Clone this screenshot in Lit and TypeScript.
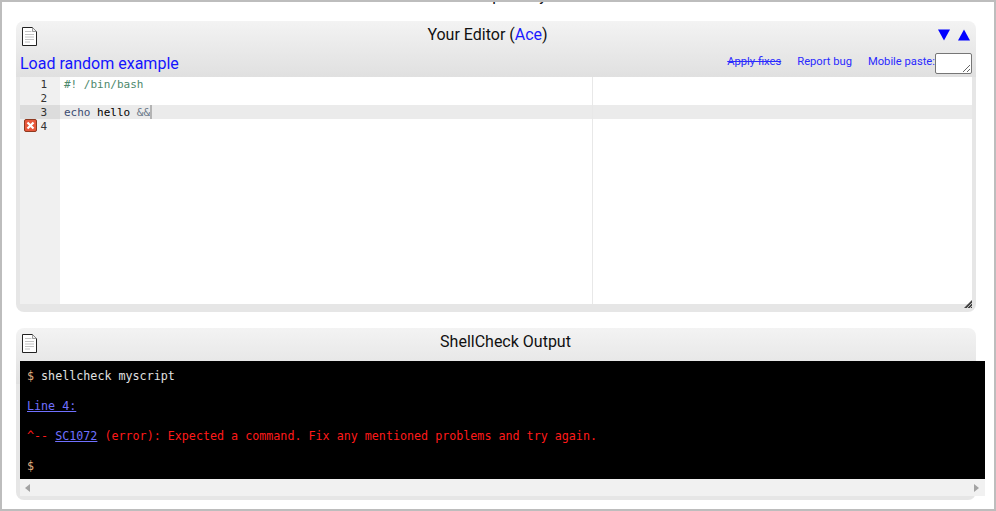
import { LitElement, html, css, svg } from "lit";
import { customElement } from "lit/decorators.js";

const docIcon = html`<svg class="doc" width="15" height="19" viewBox="0 0 15 19">
  <path d="M.5.5H10.5L14.5 4.5V18.5H.5Z" fill="#fff" stroke="#222" stroke-width="1"/>
  <path d="M10.5.5V4.5H14.5" fill="#eee" stroke="#777" stroke-width=".7"/>
  <path d="M3 4.5H9.5M3 7.5H12M3 10H12M3 12.5H12M3 15H8" stroke="#c4c4c4" stroke-width="1" fill="none"/>
</svg>`;

const tri = (up: boolean) => html`<svg width="12" height="12" viewBox="0 0 12 12">
  ${up ? svg`<path d="M6 0.5L12 11.5H0Z" fill="#00f"/>` : svg`<path d="M0 .5H12L6 11.5Z" fill="#00f"/>`}
</svg>`;

@customElement("app-root")
export class AppRoot extends LitElement {
  static styles = css`
    :host {
      display: block;
      box-sizing: border-box;
      width: 996px;
      height: 511px;
      border: 2px solid #bdbdbd;
      overflow: hidden;
      background: #fff;
      font-family: Roboto, sans-serif;
      color: #111;
    }
    a { color: #1a1aff; text-decoration: none; cursor: pointer; }
    .intro {
      height: 2px;
      overflow: hidden;
      display: flex;
      align-items: flex-end;
      justify-content: center;
      font-size: 16px;
      line-height: 1;
      margin-bottom: 17px;
    }
    .panel {
      position: relative;
      width: 960px;
      margin-left: 14px;
      box-sizing: border-box;
      border-radius: 8px;
      padding: 0 4px;
      background: linear-gradient(#f3f3f3 0, #e0e0e0 56px, #e6e6e6 56px);
    }
    .editor-panel { height: 291px; margin-bottom: 16px; }
    .output-panel { height: 172px; }
    .head {
      display: flex;
      align-items: flex-start;
      height: 29px;
    }
    .output-panel .head { height: 33px; }
    .iconbox { width: 19px; flex: none; padding: 6px 0 0 2px; box-sizing: border-box; }
    .doc { display: block; }
    .title { flex: 1; text-align: center; font-size: 16px; line-height: 26px; padding-top: 1px; }
    .arrows {
      width: 36px;
      flex: none;
      box-sizing: border-box;
      display: flex;
      gap: 8px;
      justify-content: flex-end;
      padding: 8px 2px 0 0;
    }
    .arrows svg { display: block; }
    .tools {
      display: flex;
      align-items: center;
      height: 27px;
    }
    .load { font-size: 16px; color: #1414ff; }
    .spacer { flex: 1; }
    .tools small {
      font-size: 11.2px;
      color: #2a2aff;
      margin-bottom: 4px;
    }
    .tools small + small { margin-left: 16px; }
    .tools s { color: #2a2aff; }
    textarea {
      box-sizing: border-box;
      width: 37px;
      height: 21px;
      margin: 0;
      border: 1px solid #767676;
      border-radius: 2px;
      background: #fff;
      padding: 0;
      display: block;
    }
    .ace {
      position: relative;
      display: grid;
      grid-template-columns: 40px 1fr;
      width: 952px;
      height: 227px;
      background: #fff;
      font-family: "DejaVu Sans Mono", monospace;
      font-size: 11px;
      line-height: 16px;
    }
    .gutter { background: #f0f0f0; color: #333; }
    .gl { position: relative; height: 14px; text-align: right; padding-right: 13px; }
    .gl.active { background: #dcdcdc; }
    .err {
      position: absolute;
      left: 4px;
      top: 0;
      width: 13px;
      height: 13px;
      display: block;
    }
    .code { position: relative; }
    .ln { height: 14px; padding-left: 4px; white-space: pre; color: #000; }
    .ln.active { background: #ebebeb; }
    .cm { color: #4c886b; }
    .fn { color: #3c4c72; }
    .op { color: #687687; }
    .cursor {
      display: inline-block;
      width: 2px;
      height: 14px;
      background: #b4b4b4;
      vertical-align: top;
    }
    .margin {
      position: absolute;
      left: 532px;
      top: 0;
      bottom: 0;
      width: 1px;
      background: #e8e8e8;
    }
    .grip { position: absolute; right: 4px; bottom: 4px; display: block; }
    .term {
      width: 965px;
      height: 118px;
      box-sizing: border-box;
      background: #000;
      padding: 8px 7px 0;
      font-family: "DejaVu Sans Mono", monospace;
      font-size: 11.69px;
      line-height: 15px;
      color: #e0e0e0;
      white-space: pre;
    }
    .term .d { color: #e0b080; }
    .term a { color: #7070ff; text-decoration: underline; }
    .term .r { color: #ff1a1a; }
    .hscroll {
      width: 965px;
      height: 17px;
      background: #f1f1f1;
      display: flex;
      justify-content: space-between;
      align-items: center;
      padding: 0 6px 0 5px;
      box-sizing: border-box;
    }
    .hscroll svg { display: block; }
  `;

  render() {
    return html`
      <div class="intro"><span>Paste a script to try it out</span></div>
      <section class="panel editor-panel">
        <div class="head">
          <div class="iconbox">${docIcon}</div>
          <div class="title">Your Editor (<a>Ace</a>)</div>
          <div class="arrows">${tri(false)}${tri(true)}</div>
        </div>
        <div class="tools">
          <a class="load">Load random example</a>
          <div class="spacer"></div>
          <small><s>Apply fixes</s></small>
          <small>Report bug</small>
          <small>Mobile paste:</small>
          <textarea aria-label="Mobile paste"></textarea>
        </div>
        <div class="ace">
          <div class="gutter">
            <div class="gl">1</div>
            <div class="gl">2</div>
            <div class="gl active">3</div>
            <div class="gl">
              <svg class="err" viewBox="0 0 13 13">
                <rect x=".5" y=".5" width="12" height="12" rx="1.5" fill="#e8583c" stroke="#8f3a20"/>
                <path d="M3.5 3.5L9.5 9.5M9.5 3.5L3.5 9.5" stroke="#fff" stroke-width="2.2"/>
              </svg>4
            </div>
          </div>
          <div class="code">
            <div class="margin"></div>
            <div class="ln"><span class="cm">#! /bin/bash</span></div>
            <div class="ln"></div>
            <div class="ln active"><span class="fn">echo</span> hello <span class="op">&amp;&amp;</span><span class="cursor"></span></div>
            <div class="ln"></div>
          </div>
        </div>
        <svg class="grip" width="8" height="8" viewBox="0 0 8 8">
          <path d="M0 8L8 0V8Z" fill="#444"/>
          <path d="M3 8L8 3M6 8L8 6" stroke="#ddd" stroke-width=".8"/>
        </svg>
      </section>
      <section class="panel output-panel">
        <div class="head">
          <div class="iconbox">${docIcon}</div>
          <div class="title">ShellCheck Output</div>
        </div>
        <div class="term"><span class="d">$</span> shellcheck myscript

<a>Line 4:</a>

<span class="r">^-- <a>SC1072</a> (error): Expected a command. Fix any mentioned problems and try again.</span>

<span class="d">$</span></div>
        <div class="hscroll">
          <svg width="5" height="8" viewBox="0 0 5 8"><path d="M5 0V8L0 4Z" fill="#a3a3a3"/></svg>
          <svg width="5" height="8" viewBox="0 0 5 8"><path d="M0 0V8L5 4Z" fill="#a3a3a3"/></svg>
        </div>
      </section>
    `;
  }
}
